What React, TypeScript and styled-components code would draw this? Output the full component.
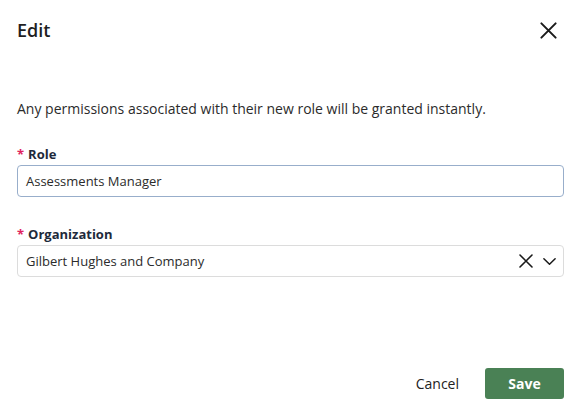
import styled, { createGlobalStyle } from "styled-components";

const GlobalStyle = createGlobalStyle`
  html, body {
    margin: 0;
    padding: 0;
    background: #ffffff;
  }
  body {
    font-family: "Open Sans", "Noto Sans", Arial, sans-serif;
    color: #212121;
  }
`;

const Dialog = styled.div`
  width: 581px;
  height: 416px;
  box-sizing: border-box;
  padding: 0 17px;
  display: flex;
  flex-direction: column;
`;

const Header = styled.div`
  display: flex;
  align-items: center;
  justify-content: space-between;
  height: 60px;
`;

const Title = styled.h2`
  margin: 0;
  font-size: 18px;
  font-weight: 600;
  color: #1f1f1f;
`;

const CloseButton = styled.button`
  border: 0;
  background: none;
  padding: 0;
  width: 20px;
  height: 20px;
  margin-right: 6px;
  display: flex;
  align-items: center;
  justify-content: center;
  cursor: pointer;
`;

const Intro = styled.p`
  margin: 39px 0 0;
  font-size: 14px;
  line-height: 20px;
  color: #2b2b2b;
`;

const Field = styled.div<{ $top: number }>`
  margin-top: ${(p) => p.$top}px;
  display: flex;
  flex-direction: column;
`;

const Label = styled.label`
  font-size: 13px;
  font-weight: 700;
  color: #1e2a3b;
  line-height: 18px;
  margin-bottom: 2px;
`;

const Star = styled.span`
  color: #e0245e;
  margin-right: 4px;
`;

const Box = styled.div<{ $focused?: boolean }>`
  height: 32px;
  box-sizing: border-box;
  border: 1px solid ${(p) => (p.$focused ? "#98aecb" : "#dcdcdc")};
  border-radius: 4px;
  display: flex;
  align-items: center;
  padding: 0 8px;
  font-size: 13px;
  color: #2b2b2b;
`;

const Value = styled.span`
  flex: 1;
`;

const Icons = styled.div`
  display: flex;
  align-items: center;
  gap: 8px;
  margin-right: -2px;
`;

const Footer = styled.div`
  margin-top: auto;
  margin-bottom: 17px;
  display: flex;
  justify-content: flex-end;
  align-items: center;
  gap: 26px;
`;

const TextButton = styled.button`
  border: 0;
  background: none;
  font-family: inherit;
  font-size: 14px;
  color: #222;
  padding: 0;
  cursor: pointer;
`;

const SaveButton = styled.button`
  width: 79px;
  height: 31px;
  border: 0;
  border-radius: 3px;
  background: #4a8155;
  color: #fff;
  font-family: inherit;
  font-size: 14px;
  font-weight: 700;
  cursor: pointer;
`;

const XIcon = ({ size, stroke }: { size: number; stroke: number }) => (
  <svg width={size} height={size} viewBox="0 0 16 16" fill="none">
    <path
      d="M2 2 L14 14 M14 2 L2 14"
      stroke="#1a1a1a"
      strokeWidth={stroke}
      strokeLinecap="round"
    />
  </svg>
);

const Chevron = () => (
  <svg width="15" height="15" viewBox="0 0 16 16" fill="none">
    <path
      d="M2 5 L8 11 L14 5"
      stroke="#1a1a1a"
      strokeWidth="1.6"
      strokeLinecap="round"
      strokeLinejoin="round"
    />
  </svg>
);

export default function App() {
  return (
    <>
      <GlobalStyle />
      <Dialog>
        <Header>
          <Title>Edit</Title>
          <CloseButton aria-label="Close">
            <XIcon size={19} stroke={1.7} />
          </CloseButton>
        </Header>
        <Intro>
          Any permissions associated with their new role will be granted
          instantly.
        </Intro>
        <Field $top={26}>
          <Label>
            <Star>*</Star>Role
          </Label>
          <Box $focused>
            <Value>Assessments Manager</Value>
          </Box>
        </Field>
        <Field $top={28}>
          <Label>
            <Star>*</Star>Organization
          </Label>
          <Box>
            <Value>Gilbert Hughes and Company</Value>
            <Icons>
              <XIcon size={16} stroke={1.6} />
              <Chevron />
            </Icons>
          </Box>
        </Field>
        <Footer>
          <TextButton>Cancel</TextButton>
          <SaveButton>Save</SaveButton>
        </Footer>
      </Dialog>
    </>
  );
}
